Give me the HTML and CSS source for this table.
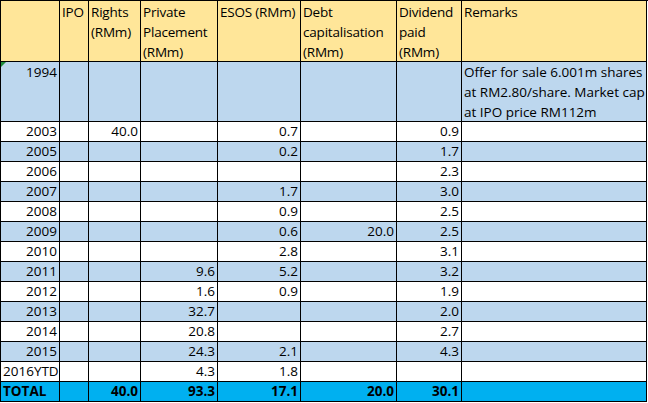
FILE: index.html
```html
<!DOCTYPE html>
<html>
<head>
<meta charset="utf-8">
<link rel="stylesheet" href="styles.css">
</head>
<body>
<div class="sheet">
  <div class="c h"></div>
  <div class="c h">IPO</div>
  <div class="c h">Rights<br>(RMm)</div>
  <div class="c h">Private<br>Placement<br>(RMm)</div>
  <div class="c h">ESOS (RMm)</div>
  <div class="c h">Debt<br>capitalisation<br>(RMm)</div>
  <div class="c h">Dividend<br>paid<br>(RMm)</div>
  <div class="c h">Remarks</div>

  <div class="c b n top flag">1994</div>
  <div class="c b"></div>
  <div class="c b"></div>
  <div class="c b"></div>
  <div class="c b"></div>
  <div class="c b"></div>
  <div class="c b"></div>
  <div class="c b t top">Offer for sale 6.001m shares<br>at RM2.80/share. Market cap<br>at IPO price RM112m</div>

  <div class="c n">2003</div><div class="c"></div><div class="c n">40.0</div><div class="c"></div><div class="c n">0.7</div><div class="c"></div><div class="c n">0.9</div><div class="c"></div>
  <div class="c b n">2005</div><div class="c b"></div><div class="c b"></div><div class="c b"></div><div class="c b n">0.2</div><div class="c b"></div><div class="c b n">1.7</div><div class="c b"></div>
  <div class="c n">2006</div><div class="c"></div><div class="c"></div><div class="c"></div><div class="c"></div><div class="c"></div><div class="c n">2.3</div><div class="c"></div>
  <div class="c b n">2007</div><div class="c b"></div><div class="c b"></div><div class="c b"></div><div class="c b n">1.7</div><div class="c b"></div><div class="c b n">3.0</div><div class="c b"></div>
  <div class="c n">2008</div><div class="c"></div><div class="c"></div><div class="c"></div><div class="c n">0.9</div><div class="c"></div><div class="c n">2.5</div><div class="c"></div>
  <div class="c b n">2009</div><div class="c b"></div><div class="c b"></div><div class="c b"></div><div class="c b n">0.6</div><div class="c b n">20.0</div><div class="c b n">2.5</div><div class="c b"></div>
  <div class="c n">2010</div><div class="c"></div><div class="c"></div><div class="c"></div><div class="c n">2.8</div><div class="c"></div><div class="c n">3.1</div><div class="c"></div>
  <div class="c b n">2011</div><div class="c b"></div><div class="c b"></div><div class="c b n">9.6</div><div class="c b n">5.2</div><div class="c b"></div><div class="c b n">3.2</div><div class="c b"></div>
  <div class="c n">2012</div><div class="c"></div><div class="c"></div><div class="c n">1.6</div><div class="c n">0.9</div><div class="c"></div><div class="c n">1.9</div><div class="c"></div>
  <div class="c b n">2013</div><div class="c b"></div><div class="c b"></div><div class="c b n">32.7</div><div class="c b"></div><div class="c b"></div><div class="c b n">2.0</div><div class="c b"></div>
  <div class="c n">2014</div><div class="c"></div><div class="c"></div><div class="c n">20.8</div><div class="c"></div><div class="c"></div><div class="c n">2.7</div><div class="c"></div>
  <div class="c b n">2015</div><div class="c b"></div><div class="c b"></div><div class="c b n">24.3</div><div class="c b n">2.1</div><div class="c b"></div><div class="c b n">4.3</div><div class="c b"></div>
  <div class="c t">2016YTD</div><div class="c"></div><div class="c"></div><div class="c n">4.3</div><div class="c n">1.8</div><div class="c"></div><div class="c"></div><div class="c"></div>
  <div class="c tot t">TOTAL</div><div class="c tot"></div><div class="c tot n">40.0</div><div class="c tot n">93.3</div><div class="c tot n">17.1</div><div class="c tot n">20.0</div><div class="c tot n">30.1</div><div class="c tot"></div>
</div>
</body>
</html>
```

FILE: styles.css
```css
html, body {
  margin: 0;
  padding: 0;
  background: #ffffff;
}
.sheet {
  display: grid;
  grid-template-columns: 59px 29px 52px 77px 83px 96px 65px 185px;
  grid-template-rows: 61px 60px repeat(14, 20px);
  width: 647px;
  border-left: 1px solid #000;
  border-top: 1px solid #000;
  font-family: "Open Sans", Lato, sans-serif;
  font-size: 13.5px;
  color: #000;
}
.c {
  box-sizing: border-box;
  border-right: 1px solid #000;
  border-bottom: 1px solid #000;
  background: #ffffff;
  line-height: 19px;
  padding: 0 2px 0 2px;
  white-space: nowrap;
  display: flex;
  align-items: flex-end;
}
.h {
  background: #ffe699;
  line-height: 20px;
  padding: 1px 0 0 2px;
  display: block;
  letter-spacing: -0.2px;
}
.b {
  background: #bdd7ee;
}
.tot {
  background: #00b0f0;
  font-weight: bold;
}
.n {
  justify-content: flex-end;
}
.t {
  justify-content: flex-start;
}
.top {
  align-items: flex-start;
  padding-top: 1px;
}
.b.t.top {
  display: block;
  line-height: 20px;
  padding-top: 0;
}
.flag {
  position: relative;
}
.flag::before {
  content: "";
  position: absolute;
  left: 0;
  top: 0;
  width: 0;
  height: 0;
  border-top: 5px solid #1e8b3a;
  border-right: 5px solid transparent;
}
```
